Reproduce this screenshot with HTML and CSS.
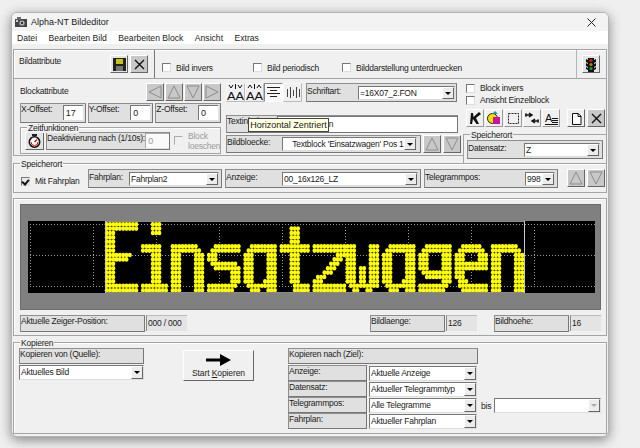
FILE: index.html
```html
<!DOCTYPE html>
<html lang="de">
<head>
  <meta charset="UTF-8" />
  <title>Alpha-NT Bildeditor</title>
  <link rel="stylesheet" href="styles.css">
</head>
<body>
  <div class="win">
    <div class="titlebar">
      <svg class="app-icon" width="12" height="10" viewBox="0 0 12 10"><rect x="0" y="2" width="12" height="8" fill="#444"/><rect x="2" y="0" width="4" height="3" fill="#666"/><circle cx="7" cy="6" r="2.6" fill="#bbb"/><circle cx="7" cy="6" r="1.2" fill="#333"/><rect x="1" y="3" width="2" height="2" fill="#ccc"/></svg>
      <span class="title">Alpha-NT Bildeditor</span>
      <svg class="close" width="9" height="9" viewBox="0 0 9 9"><path d="M0.5 0.5L8.5 8.5M8.5 0.5L0.5 8.5" stroke="#222" fill="none"/></svg>
    </div>
    <div class="menubar"><span>Datei</span><span>Bearbeiten Bild</span><span>Bearbeiten Block</span><span>Ansicht</span><span>Extras</span></div>

    <div class="row1 box">
      <div class="cell-bild">
        <span class="head">Bildattribute</span>
        <button class="btn">
          <svg width="13" height="13" viewBox="0 0 13 13"><rect width="13" height="13" fill="#222"/><rect x="3" y="1" width="7" height="5" fill="#c8c800"/><rect x="3" y="8" width="7" height="5" fill="#777"/></svg>
        </button>
        <button class="btn dim">
          <svg width="11" height="11" viewBox="0 0 11 11"><path d="M1 1L10 10M10 1L1 10" stroke="#111" stroke-width="1.4" fill="none"/></svg>
        </button>
      </div>
      <div class="cell-checks">
        <label class="chk w-bi"><i class="cb"></i>Bild invers</label>
        <label class="chk w-bp"><i class="cb"></i>Bild periodisch</label>
        <label class="chk"><i class="cb"></i>Bilddarstellung unterdruecken</label>
      </div>
      <div class="cell-light">
        <button class="btn">
          <svg width="10" height="15" viewBox="0 0 10 15"><path d="M0 2L2 3V1H8V3L10 2V5L8 6V7L10 6V9L8 10V11L10 10V12L8 13V15H2V13L0 12V10L2 11V10L0 9V6L2 7V6L0 5Z" fill="#111"/><circle cx="5" cy="3.5" r="1.6" fill="#e01010"/><circle cx="5" cy="7.5" r="1.6" fill="#b08000"/><circle cx="5" cy="11.5" r="1.6" fill="#10a030"/></svg>
        </button>
      </div>
    </div>

    <div class="mid">
      <div class="blockattr">
        <div class="col-a">
          <div class="head-row">
            <span class="head">Blockattribute</span>
            <div class="btns">
              <button class="btn dim"><svg width="14" height="14" viewBox="0 0 14 14"><path d="M13 1V13L1 7Z" class="tri"/></svg></button>
              <button class="btn dim"><svg width="14" height="14" viewBox="0 0 14 14"><path d="M1 13H13L7 1Z" class="tri"/></svg></button>
              <button class="btn dim"><svg width="14" height="14" viewBox="0 0 14 14"><path d="M1 1H13L7 13Z" class="tri"/></svg></button>
              <button class="btn dim"><svg width="14" height="14" viewBox="0 0 14 14"><path d="M1 1V13L13 7Z" class="tri"/></svg></button>
            </div>
          </div>
          <div class="offsets">
            <div class="pan off"><span class="lbl">X-Offset:</span><span class="field">17</span></div>
            <div class="pan off"><span class="lbl">Y-Offset:</span><span class="field">0</span></div>
            <div class="pan off"><span class="lbl">Z-Offset:</span><span class="field">0</span></div>
          </div>
          <div class="zeit box">
            <span class="legend">Zeitfunktionen</span>
            <div class="zeit-row">
              <button class="btn clock">
                <svg width="13" height="14" viewBox="0 0 13 14"><rect x="4" y="0" width="5" height="2" fill="#222"/><circle cx="6.5" cy="8" r="5.2" fill="#fff" stroke="#111" stroke-width="1.6"/><path d="M6.5 8L9 5.5" stroke="#d01010" stroke-width="1.4"/><path d="M3 8A3.5 3.5 0 0 0 10 8" stroke="#d01010" fill="none"/></svg>
              </button>
              <div class="pan deakt"><span class="lbl">Deaktivierung nach (1/10s):</span><span class="field off-field">0</span></div>
              <i class="cb off-cb"></i>
              <span class="block-del">Block<br>loeschen</span>
            </div>
          </div>
        </div>

        <div class="col-b">
          <div class="font-row">
            <button class="ico plain">
              <svg width="17" height="17" viewBox="0 0 17 17"><path d="M2 1L4 4L6 1M11 1L13 4L15 1" class="ln"/><path d="M8.5 0V5" class="ln"/><text x="0" y="16" class="aa" textLength="17" lengthAdjust="spacingAndGlyphs">AA</text></svg>
            </button>
            <button class="ico plain">
              <svg width="17" height="17" viewBox="0 0 17 17"><path d="M2 4L4 1L6 4M11 4L13 1L15 4" class="ln"/><path d="M8.5 0V5" class="ln"/><text x="0" y="16" class="aa" textLength="17" lengthAdjust="spacingAndGlyphs">AA</text></svg>
            </button>
            <button class="ico on">
              <svg width="13" height="13" viewBox="0 0 13 13"><path d="M0 1.5H13M3 4.5H10M0 7.5H13M3 10.5H10" stroke="#222" fill="none"/></svg>
            </button>
            <button class="ico plain">
              <svg width="14" height="13" viewBox="0 0 14 13"><path d="M1.5 3V11M4.5 1V12M7.5 4V10M10.5 1V12M13.5 3V11" stroke="#444" fill="none"/></svg>
            </button>
            <div class="pan font-pan"><span class="lbl">Schriftart:</span><span class="combo w-font"><span class="val">=16X07_2.FON</span><b class="drop"></b></span></div>
          </div>
          <div class="pan text-pan">
            <span class="lbl">Textinhalt:</span>
            <span class="field text-field">Einsatzwagen</span>
            <span class="tip">Horizontal Zentriert</span>
          </div>
          <div class="bild-row">
            <div class="pan bild-pan"><span class="lbl">Bildbloecke:</span><span class="combo w-bild"><span class="val ind">Textblock 'Einsatzwagen' Pos 1</span><b class="drop"></b></span></div>
            <button class="btn dim"><svg width="14" height="14" viewBox="0 0 14 14"><path d="M1 13H13L7 1Z" class="tri"/></svg></button>
            <button class="btn dim"><svg width="14" height="14" viewBox="0 0 14 14"><path d="M1 1H13L7 13Z" class="tri"/></svg></button>
          </div>
        </div>
      </div>

      <div class="right">
        <div class="right-top">
          <label class="chk"><i class="cb"></i>Block invers</label>
          <label class="chk"><i class="cb"></i>Ansicht Einzelblock</label>
          <div class="tools">
            <button class="ico flat"><svg width="14" height="14" viewBox="0 0 14 14"><path d="M2 13L3 2H5L5.5 6L11 1L13 3L8 7L11 13H8.5L5 8L4 13Z" fill="#111"/></svg></button>
            <button class="ico flat"><svg width="14" height="14" viewBox="0 0 14 14"><circle cx="5.5" cy="7.5" r="5" fill="#f4e000" stroke="#222"/><rect x="6" y="6" width="7" height="7" fill="#d010a0"/><path d="M5 3L8 0L11 3Z" fill="#10a0a0"/></svg></button>
            <button class="ico flat"><svg width="13" height="13" viewBox="0 0 13 13"><rect x="1.5" y="1.5" width="10" height="10" fill="none" stroke="#222" stroke-dasharray="2 1"/></svg></button>
            <button class="ico flat"><svg width="14" height="12" viewBox="0 0 14 12"><path d="M0 3H7M4 1L7 3L4 5M14 9H7M10 7L7 9L10 11" stroke="#111" stroke-width="1.5" fill="none"/><path d="M1 1V5M13 7V11" stroke="#111"/></svg></button>
            <button class="ico flat"><svg width="15" height="14" viewBox="0 0 15 14"><text x="1" y="11" class="aa">A</text><path d="M8 7.5H14M8 9.5H14M8 11.5H14M1 13.5H14" stroke="#111" fill="none"/></svg></button>
            <button class="btn doc"><svg width="11" height="13" viewBox="0 0 11 13"><path d="M1.5 1.5H7L10 4V12.5H1.5Z" fill="#fff" stroke="#111"/><path d="M7 1.5V4.5H10" fill="none" stroke="#111"/></svg></button>
            <button class="btn dim"><svg width="11" height="11" viewBox="0 0 11 11"><path d="M1 1L10 10M10 1L1 10" stroke="#111" stroke-width="1.4" fill="none"/></svg></button>
          </div>
        </div>
        <div class="daten">
          <span class="legend">Speicherort</span>
          <div class="pan daten-pan"><span class="lbl">Datensatz:</span><span class="combo w-daten"><span class="val">Z</span><b class="drop"></b></span></div>
        </div>
      </div>
    </div>

    <div class="speicher box">
      <span class="legend">Speicherort</span>
      <div class="speicher-row">
        <label class="chk w-mf"><i class="cb checked"></i>Mit Fahrplan</label>
        <div class="pan p-fahr"><span class="lbl">Fahrplan:</span><span class="combo w-fahr"><span class="val">Fahrplan2</span><b class="drop"></b></span></div>
        <div class="pan p-anz"><span class="lbl">Anzeige:</span><span class="combo w-anz"><span class="val">00_16x126_LZ</span><b class="drop"></b></span></div>
        <div class="pan p-tel"><span class="lbl">Telegrammpos:</span><span class="combo w-tel"><span class="val">998</span><b class="drop"></b></span></div>
        <button class="btn dim up"><svg width="14" height="14" viewBox="0 0 14 14"><path d="M1 13H13L7 1Z" class="tri"/></svg></button>
        <button class="btn dim"><svg width="14" height="14" viewBox="0 0 14 14"><path d="M1 1H13L7 13Z" class="tri"/></svg></button>
      </div>
    </div>

    <div class="preview box">
      <div class="lcd">
        <svg id="led" class="led" width="567" height="72" viewBox="0 0 567 72"></svg>
      </div>
      <div class="info">
        <div class="pan i-pos"><span class="lbl">Aktuelle Zeiger-Position:</span></div>
        <span class="readout r-pos">000 / 000</span>
        <div class="pan i-len"><span class="lbl">Bildlaenge:</span></div>
        <span class="readout r-len">126</span>
        <div class="pan i-hoe"><span class="lbl">Bildhoehe:</span></div>
        <span class="readout r-len">16</span>
      </div>
    </div>

    <div class="kopieren box">
      <span class="legend">Kopieren</span>
      <div class="kop-row">
        <div class="quelle">
          <div class="pan p-head"><span class="lbl">Kopieren von (Quelle):</span></div>
          <span class="combo w-full"><span class="val">Aktuelles Bild</span><b class="drop"></b></span>
        </div>
        <button class="btn start">
          <svg width="25" height="12" viewBox="0 0 25 12"><path d="M0 4.5H14V0L25 6L14 12V7.5H0Z" fill="#000"/></svg>
          <span>Start <u>K</u>opieren</span>
        </button>
        <div class="ziel">
          <div class="pan z-head"><span class="lbl">Kopieren nach (Ziel):</span></div>
          <div class="z-row"><div class="pan z-lbl"><span class="lbl">Anzeige:</span></div><span class="combo w-ziel"><span class="val">Aktuelle Anzeige</span><b class="drop"></b></span></div>
          <div class="z-row"><div class="pan z-lbl"><span class="lbl">Datensatz:</span></div><span class="combo w-ziel"><span class="val">Aktueller Telegrammtyp</span><b class="drop"></b></span></div>
          <div class="z-row"><div class="pan z-lbl"><span class="lbl">Telegrammpos:</span></div><span class="combo w-ziel"><span class="val">Alle Telegramme</span><b class="drop"></b></span><span class="bis">bis</span><span class="combo w-bis"><span class="val"></span><b class="drop dis"></b></span></div>
          <div class="z-row"><div class="pan z-lbl"><span class="lbl">Fahrplan:</span></div><span class="combo w-ziel"><span class="val">Aktueller Fahrplan</span><b class="drop"></b></span></div>
        </div>
      </div>
    </div>
  </div>
  <script src="script.js"></script>
</body>
</html>
```
FILE: styles.css
```css
* {
  margin: 0;
  padding: 0;
  box-sizing: border-box;
}

body {
  width: 640px;
  height: 448px;
  overflow: hidden;
  padding: 12px 0 0 11px;
  background: #efefef;
  font-family: "Liberation Sans", sans-serif;
  font-size: 8.5px;
  letter-spacing: -0.22px;
  color: #222;
}

.win {
  width: 598px;
  height: 425px;
  background: #f0f0f0;
  border-radius: 6px;
  border: 1px solid #b4b4b4;
  box-shadow: 0 3px 12px rgba(0,0,0,0.45);
  overflow: hidden;
  padding: 0 1px;
}

.titlebar {
  display: flex;
  align-items: center;
  height: 18px;
  margin: 0 -1px;
  padding: 0 12px 0 3px;
  background: #f3f3f3;
  font-size: 9px;
  letter-spacing: 0;
}

.title { margin-left: 4px; flex: 1; }

.menubar {
  display: flex;
  align-items: center;
  gap: 11.5px;
  height: 13px;
  margin: 0 -1px;
  padding-left: 5px;
  background: #fff;
  font-size: 8.6px;
  letter-spacing: 0;
}

.box {
  border: 1px solid #a4a4a4;
  box-shadow: inset 1px 1px 0 #fff;
}

.row1 {
  display: flex;
  height: 30px;
  margin-top: 5px;
}

.cell-bild {
  display: flex;
  width: 141px;
  padding: 5px 0 0 5px;
  border-right: 1px solid #777;
}

.head { width: 91px; padding-top: 1px; }

.cell-bild .btn { margin-right: 2px; }

.cell-checks {
  flex: 1;
  display: flex;
  align-items: center;
  padding: 7px 0 0 7px;
}

.cell-light {
  width: 30px;
  padding: 5px 0 0 5px;
  border-left: 1px solid #b4b4b4;
}

.btn {
  display: flex;
  align-items: center;
  justify-content: center;
  width: 18px;
  height: 18px;
  background: #e4e4e4;
  border: 1px solid;
  border-color: #fff #666 #666 #fff;
}

.btn.dim { background: #c8c8c8; }

.tri {
  fill: none;
  stroke: #8c8c8c;
  stroke-width: 1;
}

.chk {
  display: flex;
  align-items: center;
  white-space: nowrap;
}

.w-bi { width: 91px; }
.w-bp { width: 89px; }
.w-mf { width: 67px; margin-top: 5px; }

.cb {
  flex: none;
  width: 9px;
  height: 9px;
  margin-right: 5px;
  background: #fff;
  border: 1px solid;
  border-color: #777 #ddd #ddd #777;
  position: relative;
}

.cb.checked {
  background: #e8e8e8;
}

.cb.checked::after {
  content: "";
  position: absolute;
  left: 1px;
  top: 0;
  width: 3px;
  height: 5px;
  border: solid #111;
  border-width: 0 2px 2px 0;
  transform: rotate(40deg);
}

.mid {
  display: flex;
  height: 85px;
}

.blockattr {
  display: flex;
  width: 450px;
  height: 77px;
  padding: 4px 0 0 6px;
  border-left: 1px solid #a4a4a4;
  border-bottom: 1px solid #a4a4a4;
}

.col-a { width: 206px; }

.head-row { display: flex; height: 20px; }

.head-row .head { width: 126px; padding-top: 3px; }

.btns { display: flex; gap: 1px; }

.btns .btn { width: 18px; }

.offsets {
  display: flex;
  gap: 2px;
  width: 201px;
}

.pan {
  display: flex;
  background: #e0e0e0;
  border: 1px solid #8e8e8e;
  border-right-color: #777;
  border-bottom-color: #777;
  line-height: 11px;
}

.off { flex: 1; height: 20px; justify-content: space-between; padding-right: 2px; }

.field {
  background: #fff;
  padding: 2px 0 0 2px;
  border-left: 1px solid #777;
  border-top: 1px solid #777;
  height: 15px;
  font-size: 9px;
  letter-spacing: 0;
}

.off .field { width: 20px; margin-top: 1px; }

.zeit {
  position: relative;
  width: 201px;
  height: 27px;
  margin-top: 4px;
  padding: 4px 0 0 4px;
}

.legend {
  position: absolute;
  top: -5px;
  left: 6px;
  padding: 0 1px;
  background: #f0f0f0;
  line-height: 10px;
  font-size: 8.5px;
}

.zeit-row { display: flex; align-items: flex-start; }

.clock { flex: none; width: 19px; margin-right: 2px; }

.deakt { flex: none; width: 124px; height: 18px; }

.deakt .lbl { width: 100px; white-space: nowrap; }

.off-field {
  width: 24px;
  background: #fafafa;
  color: #999;
  border-color: #aaa;
}

.off-cb { margin: 4px 5px 0 4px; background: #f0f0f0; border-color: #aaa #eee #eee #aaa; }

.block-del { color: #9a9a9a; line-height: 10px; margin-top: -1px; }

.col-b { width: 235px; }

.font-row { display: flex; height: 20px; }

.ico {
  display: flex;
  align-items: center;
  justify-content: center;
  width: 19px;
  height: 19px;
  background: #f0f0f0;
  border: 1px solid;
  border-color: #fff #999 #999 #fff;
}

.ico.plain { border-color: #f8f8f8 #bbb #bbb #f8f8f8; }

.ico.on {
  background: #f8f8f8;
  border-color: #888 #fff #fff #888;
}

.ln { stroke: #111; fill: none; }

.aa {
  font-family: "Liberation Sans", sans-serif;
  font-size: 11px;
  letter-spacing: 0;
  fill: #111;
}

.font-pan { width: 151px; height: 19px; margin-left: 4px; justify-content: space-between; padding: 2px 1px 0 0; }

.combo {
  display: flex;
  height: 14px;
  background: #fff;
  border: 1px solid;
  border-color: #777 #ddd #ddd #777;
  line-height: 12px;
}

.val { flex: 1; padding-left: 1px; white-space: nowrap; overflow: hidden; }

.val.ind { padding-left: 9px; }

.drop {
  flex: none;
  position: relative;
  width: 12px;
  background: #ececec;
  border: 1px solid;
  border-color: #fff #666 #666 #fff;
}

.drop::after {
  content: "";
  position: absolute;
  left: 2px;
  top: 4px;
  border: 3px solid transparent;
  border-top: 3px solid #000;
  border-bottom: 0;
}

.drop.dis::after { border-top-color: #aaa; }

.w-font { width: 97px; }

.text-pan {
  position: relative;
  width: 232px;
  height: 18px;
  margin-top: 12px;
  justify-content: space-between;
}

.text-field {
  width: 180px;
  height: 16px;
  padding: 2px 0 0 5px;
  white-space: nowrap;
  font-size: 8.5px;
  letter-spacing: -0.22px;
}

.tip {
  position: absolute;
  left: 21px;
  top: 2px;
  width: 81px;
  height: 14px;
  padding-top: 1px;
  text-align: center;
  font-size: 9px;
  letter-spacing: 0;
  background: #ffffe1;
  border: 1px solid #444;
}

.bild-row {
  display: flex;
  margin-top: 2px;
}

.bild-pan { width: 196px; height: 18px; justify-content: space-between; padding: 1px 3px 0 0; }

.bild-row .btn { margin-left: 2px; }

.w-bild { width: 135px; }

.right {
  width: 144px;
  display: flex;
  flex-direction: column;
  border-top: 1px solid #a4a4a4;
  border-right: 1px solid #a4a4a4;
  margin-top: -1px;
}

.right-top {
  padding: 3px 0 0 3px;
  height: 55px;
}

.right-top .chk { height: 12px; }

.tools {
  display: flex;
  margin-top: 3px;
}

.ico.flat { width: 18px; margin-right: 1px; height: 18px; }

.doc { margin: 0 2px 0 6px; background: #eee; }

.daten {
  position: relative;
  flex: 1;
  border-top: 1px solid #a4a4a4;
  border-left: 1px solid #a4a4a4;
  padding: 5px 0 0 3px;
}

.daten-pan { width: 136px; height: 19px; justify-content: space-between; padding: 2px 2px 0 0; }

.w-daten { width: 76px; }

.speicher {
  position: relative;
  height: 30px;
  margin-top: -1px;
}

.speicher-row {
  display: flex;
  padding: 5px 0 0 7px;
}

.speicher-row .pan { height: 19px; justify-content: space-between; padding: 2px 2px 0 0; margin-right: 3px; }

.p-fahr { width: 134px; }
.p-anz { width: 196px; }
.p-tel { width: 134px; }
.w-fahr { width: 90px; }
.w-anz { width: 136px; }
.w-tel { width: 30px; }

.up { margin: 0 2px 0 6px; }

.preview {
  height: 138px;
  margin-top: 5px;
  padding: 5px 5px 0 6px;
}

.lcd {
  height: 106px;
  padding: 16px 0 0 7px;
  background: #808080;
  border: 1px solid #6c6c6c;
}

.led {
  display: block;
  background: #000;
}

.info {
  display: flex;
  margin-top: 5px;
}

.info .pan { height: 17px; }

.i-pos { width: 125px; }
.i-len { width: 75px; margin-left: 183px; }
.i-hoe { width: 75px; margin-left: 17px; }

.readout {
  background: #e4e4e4;
  height: 16px;
  padding: 2px 0 0 1px;
  border-left: 1px solid #888;
  border-top: 1px solid #bbb;
  margin-left: 1px;
}

.r-pos { width: 41px; }
.r-len { width: 31px; }

.kopieren {
  position: relative;
  height: 92px;
  margin-top: 6px;
}

.kop-row {
  display: flex;
  padding: 5px 0 0 5px;
}

.quelle { width: 125px; }

.p-head { height: 16px; }

.w-full { width: 125px; margin-top: 1px; height: 15px; }

.start {
  flex-direction: column;
  gap: 2px;
  width: 71px;
  height: 31px;
  margin: 2px 34px 0 39px;
  background: #f0f0f0;
  font-family: "Liberation Sans", sans-serif;
  font-size: 8.5px;
  letter-spacing: -0.1px;
  color: #222;
}

.z-head { width: 190px; height: 16px; }

.z-row { display: flex; align-items: center; height: 16px; margin-top: 0; }

.z-head + .z-row { margin-top: 1px; }

.z-lbl { width: 79px; height: 16px; }

.w-ziel { width: 108px; margin-left: 2px; height: 15px; }

.bis { margin: 2px 3px 0 4px; }

.w-bis { width: 107px; height: 15px; }
```
FILE: script.js
```js
// LED matrix of the preview, drawn from a small bitmap font
const glyphs = {
  E: ["##########","##########","###","###","###","###","###","########","#######","###","###","###","###","###","##########","##########"],
  i: ["...###","...###","...###","","","######","######","...###","...###","...###","...###","...###","...###","...###","########","########"],
  n: ["","","","","","########","#########","###....###","###....###","###....###","###....###","###....###","###....###","###....###","###....###","###....###"],
  s: ["","","","","","..########",".#########","###","###",".########","..########",".......###",".......###",".......###","#########","########"],
  a: ["","","","","","..########",".#########","###....###","###....###","###....###","###....###","###....###","###....###","###...####",".#########","..###..###"],
  t: ["","...###","...###","...###","...###","#########","#########","...###","...###","...###","...###","...###","...###","...###","....#####","....#####"],
  z: ["","","","","","##########","##########",".......###","......###",".....###","....###","...###",".###","###","##########","##########"],
  w: ["","","","","","###....###","###....###","###....###","###....###","###....###","###.##.###","###.##.###","###.##.###","###.##.###",".#########","..##..##"],
  g: ["","","","","","..########",".#########","###....###","###....###","###....###","###....###",".#########","..########",".......###","#########","########"],
  e: ["","","","","","..######",".########","###....###","###....###","##########","##########","###","###",".###",".#########","..########"]
};

const text = [["E",0],["i",11],["n",20],["s",31],["a",42],["t",53],["z",63],["w",73],["a",84],["g",95],["e",106],["n",117]];

const COL = 3.3;
const ROW = 4.4;
const LEFT = 77;

let parts = "";

// dotted raster of the display
[3, 34, 65].forEach(y => {
  parts += `<line x1="2" x2="567" y1="${y}.5" y2="${y}.5" class="grid"/>`;
});
for (let x = 2; x < 567; x += 63) {
  parts += `<line x1="${x}.5" x2="${x}.5" y1="3" y2="66" class="grid"/>`;
}

text.forEach(([ch, start]) => {
  glyphs[ch].forEach((row, r) => {
    [...row].forEach((c, k) => {
      if (c !== "#") return;
      const cx = LEFT + (start + k + 0.5) * COL;
      const cy = 1 + (r + 0.5) * ROW;
      parts += `<ellipse cx="${cx.toFixed(1)}" cy="${cy.toFixed(1)}" rx="2" ry="2.3" fill="#ffff00"/>`;
    });
  });
});

// frame of the text block
parts += `<path d="M77 0.5H496M77 71.5H496" stroke="#8a8a8a" fill="none"/><path d="M77.5 0V72M496.5 0V72" stroke="#c8c8c8" fill="none"/>`;

document.getElementById("led").innerHTML = parts + `<style>.grid{stroke:#999;stroke-dasharray:1 2;fill:none}</style>`;
```
